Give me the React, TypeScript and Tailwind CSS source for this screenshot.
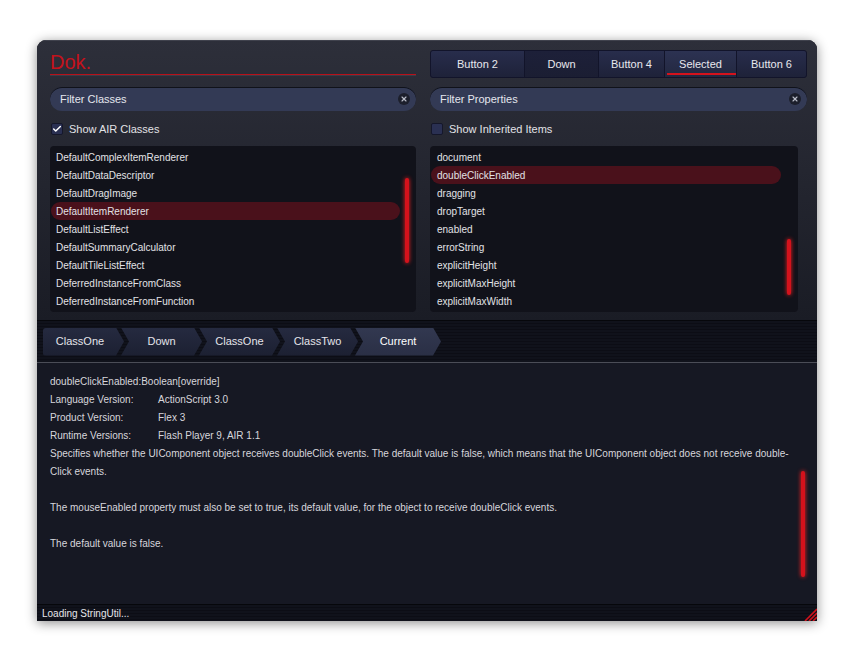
import { Check, X } from 'lucide-react';

const classes = [
  'DefaultComplexItemRenderer',
  'DefaultDataDescriptor',
  'DefaultDragImage',
  'DefaultItemRenderer',
  'DefaultListEffect',
  'DefaultSummaryCalculator',
  'DefaultTileListEffect',
  'DeferredInstanceFromClass',
  'DeferredInstanceFromFunction',
];

const properties = [
  'document',
  'doubleClickEnabled',
  'dragging',
  'dropTarget',
  'enabled',
  'errorString',
  'explicitHeight',
  'explicitMaxHeight',
  'explicitMaxWidth',
];

const tabs = [
  { label: 'Button 2', w: 'w-[93px]', state: 'normal' },
  { label: 'Down', w: 'w-[74px]', state: 'down' },
  { label: 'Button 4', w: 'w-[66px]', state: 'normal' },
  { label: 'Selected', w: 'w-[72px]', state: 'selected' },
  { label: 'Button 6', w: 'flex-1', state: 'normal' },
];

const crumbs = ['ClassOne', 'Down', 'ClassOne', 'ClassTwo', 'Current'];

const texture =
  'bg-[repeating-linear-gradient(180deg,#10121b_0px,#10121b_2px,#0c0d15_2px,#0c0d15_3px)]';

function FilterInput({ placeholder }: { placeholder: string }) {
  return (
    <div className="flex h-6 items-center rounded-full bg-[#333a55] pl-[10px] pr-[6px] shadow-[inset_0_1px_0_#10121a]">
      <span className="flex-1 pt-px text-[11px] text-[#e4e6ee]">{placeholder}</span>
      <span className="flex h-3 w-3 items-center justify-center rounded-full bg-[#1c1f2c]">
        <X size={8} strokeWidth={3.5} className="text-[#b9bcc8]" />
      </span>
    </div>
  );
}

function CheckRow({ label, checked }: { label: string; checked: boolean }) {
  return (
    <div className="flex h-[14px] items-center gap-[6px] pl-[1px]">
      <span className="flex h-3 w-3 items-center justify-center rounded-[2px] border border-[#15172a] bg-[#2a3052]">
        {checked && <Check size={10} strokeWidth={3.5} className="text-white" />}
      </span>
      <span className="text-[11px] text-[#e2e2e6]">{label}</span>
    </div>
  );
}

function List({
  items,
  selected,
  textPad,
  selRight,
  barTop,
  barHeight,
}: {
  items: string[];
  selected: number;
  textPad: string;
  selRight: string;
  barTop: string;
  barHeight: string;
}) {
  return (
    <div className="relative h-[166px] rounded-[4px] bg-[#11121a] pt-[2px]">
      {items.map((item, i) => (
        <div
          key={item}
          className={`flex h-[18px] items-center text-[10px] text-[#e2e2e6] ${textPad} ${
            i === selected ? `ml-px rounded-full bg-[#4a111b] ${selRight}` : ''
          }`}
        >
          <span className={i === selected ? '-ml-px' : ''}>{item}</span>
        </div>
      ))}
      <div
        className={`absolute right-[7px] w-[4px] rounded-full bg-[#d4121c] shadow-[0_0_4px_#ff2020] ${barTop} ${barHeight}`}
      />
    </div>
  );
}

export default function App() {
  return (
    <div className="min-h-[660px] bg-white pl-[37px] pt-[40px] font-['Liberation_Sans',Arial,sans-serif]">
      <div className="flex h-[581px] w-[780px] flex-col overflow-hidden rounded-t-[9px] bg-[#161823] shadow-[0_2px_12px_rgba(0,0,0,0.45)]">
        {/* Top panel */}
        <div className="grid grid-cols-[366px_377px] gap-x-[14px] bg-linear-to-b from-[#2d2f3a] to-[#1a1c25] pl-[13px] pt-[10px] shadow-[inset_0_1px_0_#40424d]">
          {/* Logo */}
          <div className="flex h-7 flex-col justify-end">
            <div className="border-b border-[#b8111a] pb-px text-[20px] leading-[22px] text-[#c4121c] shadow-[0_1px_0_#3a3c47]">
              Dok.
            </div>
            <div className="h-[3px]" />
          </div>

          {/* Tab buttons */}
          <div className="flex h-7 overflow-hidden rounded-[3px] border border-[#12142a] bg-[#12142a]">
            {tabs.map((t, i) => (
              <div
                key={t.label}
                className={`relative flex items-center justify-center text-[11px] text-[#e8e8ee] ${t.w} ${
                  i > 0 ? 'border-l border-[#12142a]' : ''
                } ${
                  t.state === 'down'
                    ? 'bg-linear-to-b from-[#1d2039] to-[#1b1e33]'
                    : t.state === 'selected'
                      ? 'bg-linear-to-b from-[#2c3252] to-[#232840]'
                      : 'bg-linear-to-b from-[#282d4c] to-[#1e2239]'
                }`}
              >
                {t.label}
                {t.state === 'selected' && (
                  <span className="absolute bottom-[2px] left-[2px] right-0 h-[2px] bg-[#d4121c]" />
                )}
              </div>
            ))}
          </div>

          <div className="mt-[9px]">
            <FilterInput placeholder="Filter Classes" />
          </div>
          <div className="mt-[9px]">
            <FilterInput placeholder="Filter Properties" />
          </div>

          <div className="mt-[11px]">
            <CheckRow label="Show AIR Classes" checked />
          </div>
          <div className="mt-[11px]">
            <CheckRow label="Show Inherited Items" checked={false} />
          </div>

          <div className="mt-[10px] pb-2">
            <List
              items={classes}
              selected={3}
              textPad="pl-[6px]"
              selRight="mr-[16px]"
              barTop="top-[32px]"
              barHeight="h-[85px]"
            />
          </div>
          <div className="mt-[10px] mr-[9px] pb-2">
            <List
              items={properties}
              selected={1}
              textPad="pl-[7px]"
              selRight="mr-[17px]"
              barTop="top-[93px]"
              barHeight="h-[56px]"
            />
          </div>
        </div>

        {/* Breadcrumb bar */}
        <div className={`flex h-[43px] items-center border-y border-t-[#06070b] border-b-[#4b4d57] pl-[6px] ${texture}`}>
          {crumbs.map((c, i) => {
            const last = i === crumbs.length - 1;
            return (
              <div
                key={i}
                className={`flex h-7 items-center justify-center text-[11px] ${
                  i === 0
                    ? 'w-[81px] rounded-l-[3px] pr-[7px] [clip-path:polygon(0_0,calc(100%_-_8px)_0,100%_50%,calc(100%_-_8px)_100%,0_100%)]'
                    : `-ml-[3px] [clip-path:polygon(0_0,calc(100%_-_8px)_0,100%_50%,calc(100%_-_8px)_100%,0_100%,8px_50%)] ${
                        last ? 'w-[86px]' : 'w-[81px]'
                      }`
                } ${
                  last
                    ? 'bg-linear-to-b from-[#323850] to-[#2a2f45] text-white'
                    : 'bg-linear-to-b from-[#252a40] to-[#1c2032] text-[#e4e4ea]'
                }`}
              >
                {c}
              </div>
            );
          })}
        </div>

        {/* Details */}
        <div className="relative flex-1 bg-[#161823] pl-[13px] pr-[24px] pt-[10px] text-[10px] leading-[18px] text-[#d6d6dc]">
          <div>doubleClickEnabled:Boolean[override]</div>
          <div className="grid grid-cols-[108px_1fr]">
            <span>Language Version:</span>
            <span>ActionScript 3.0</span>
            <span>Product Version:</span>
            <span>Flex 3</span>
            <span>Runtime Versions:</span>
            <span>Flash Player 9, AIR 1.1</span>
          </div>
          <p>
            Specifies whether the UIComponent object receives doubleClick events. The default value is false, which
            means that the UIComponent object does not receive double-Click events.
          </p>
          <p className="mt-[18px]">
            The mouseEnabled property must also be set to true, its default value, for the object to receive doubleClick
            events.
          </p>
          <p className="mt-[18px]">The default value is false.</p>
          <div className="absolute right-[12px] top-[108px] h-[106px] w-[4px] rounded-full bg-[#d4121c] shadow-[0_0_4px_#ff2020]" />
        </div>

        {/* Status bar */}
        <div className={`flex h-[17px] items-center justify-between border-t border-[#06070b] pl-[5px] ${texture}`}>
          <span className="text-[10px] text-[#e6e6ea]">Loading StringUtil...</span>
          <svg width="14" height="14" viewBox="0 0 14 14" className="self-end">
            <path d="M2 14 L14 2 M6 14 L14 6 M10 14 L14 10" stroke="#d0121c" strokeWidth="1.6" />
          </svg>
        </div>
      </div>
    </div>
  );
}
